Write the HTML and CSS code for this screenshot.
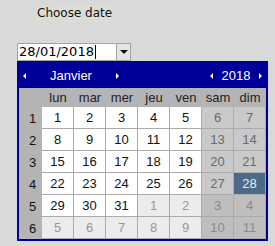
FILE: index.html
```html
<!DOCTYPE html>
<html lang="fr">
<head>
  <meta charset="UTF-8">
  <title>Choose date</title>
  <link rel="stylesheet" href="styles.css">
</head>
<body>

  <div class="label">Choose date</div>

  <!-- champ date -->
  <div class="field">
    <div class="field-input">28/01/2018<span class="caret"></span></div>
    <div class="field-btn"><span class="down"></span></div>
  </div>

  <!-- calendrier -->
  <div class="popup">
    <div class="head">
      <span class="arr left"></span>
      <span class="month">Janvier</span>
      <span class="arr right"></span>
      <span class="spacer"></span>
      <span class="arr left"></span>
      <span class="year">2018</span>
      <span class="arr right"></span>
    </div>
    <table class="cal">
      <tr class="days">
        <th class="wk"></th><th>lun</th><th>mar</th><th>mer</th><th>jeu</th><th>ven</th><th>sam</th><th>dim</th>
      </tr>
      <tr>
        <td class="wk">1</td><td>1</td><td>2</td><td>3</td><td>4</td><td>5</td><td class="we">6</td><td class="we">7</td>
      </tr>
      <tr>
        <td class="wk">2</td><td>8</td><td>9</td><td>10</td><td>11</td><td>12</td><td class="we">13</td><td class="we">14</td>
      </tr>
      <tr>
        <td class="wk">3</td><td>15</td><td>16</td><td>17</td><td>18</td><td>19</td><td class="we">20</td><td class="we">21</td>
      </tr>
      <tr>
        <td class="wk">4</td><td>22</td><td>23</td><td>24</td><td>25</td><td>26</td><td class="we">27</td><td class="sel">28</td>
      </tr>
      <tr>
        <td class="wk">5</td><td>29</td><td>30</td><td>31</td><td class="out">1</td><td class="out">2</td><td class="out we">3</td><td class="out we">4</td>
      </tr>
      <tr>
        <td class="wk">6</td><td class="out">5</td><td class="out">6</td><td class="out">7</td><td class="out">8</td><td class="out">9</td><td class="out we">10</td><td class="out we">11</td>
      </tr>
    </table>
  </div>

</body>
</html>
```

FILE: styles.css
```css
* { margin:0; padding:0; box-sizing:border-box; }
html, body { width:100%; height:100%; background:#d9d9d9; color:#111; }
body { font-family:"DejaVu Sans", sans-serif; font-size:12px; }

.label {
  display:inline-block;
  margin:5px 0 0 35px;
  padding:0 2px;
  height:17px;
  line-height:17px;
  background:#dcdcd7;
}

.field {
  display:flex;
  width:114px;
  height:18px;
  margin:21px 0 0 17px;
}
.field-input {
  flex:1;
  background:#fff;
  border:1px solid #a4a4a4;
  font-size:13px;
  line-height:16px;
  padding-left:1px;
  display:flex;
  align-items:center;
  color:#000;
}
.caret {
  display:inline-block;
  width:1px;
  height:14px;
  background:#000;
  margin-left:1px;
}
.field-btn {
  width:14px;
  background:#e4e4e2;
  border:1px solid #a4a4a4;
  border-left:none;
  display:flex;
  align-items:center;
  justify-content:center;
}
.down {
  border-left:4px solid transparent;
  border-right:4px solid transparent;
  border-top:4px solid #111;
}

.popup {
  width:251px;
  margin-left:17px;
  border:2px solid #000099;
  background:#000099;
}
.head {
  display:flex;
  align-items:center;
  height:25px;
  padding:0 4px;
  color:#fff;
  font-family:"Liberation Sans", Arial, sans-serif;
  font-size:13px;
}
.arr { width:0; height:0; border-top:3px solid transparent; border-bottom:3px solid transparent; }
.arr.left { border-right:3px solid #fff; }
.arr.right { border-left:3px solid #fff; }
.month { width:90px; text-align:center; }
.year { width:46px; text-align:center; }
.spacer { flex:1; }

.cal {
  border-spacing:0;
  table-layout:fixed;
  width:247px;
  font-family:"Liberation Sans", Arial, sans-serif;
  font-size:13px;
  color:#111;
}
.cal th, .cal td { text-align:center; padding:0; }
.cal th {
  height:19px;
  font-weight:normal;
  background:#b4b4b4;
  color:#222;
}
.cal td {
  height:22px;
  width:32px;
  background:#fff;
  border-right:1px solid #ababab;
  border-bottom:1px solid #ababab;
}
.cal .wk {
  width:23px;
  background:#b4b4b4;
  border:none;
  padding-left:4px;
}
.cal td.we { background:#c9c9c9; color:#6a6a6a; }
.cal td.out { background:#ececec; color:#979797; }
.cal td.out.we { background:#bebebe; color:#8a8a8a; }
.cal td.sel { background:#4b6a88; color:#e8eef5; }
```
